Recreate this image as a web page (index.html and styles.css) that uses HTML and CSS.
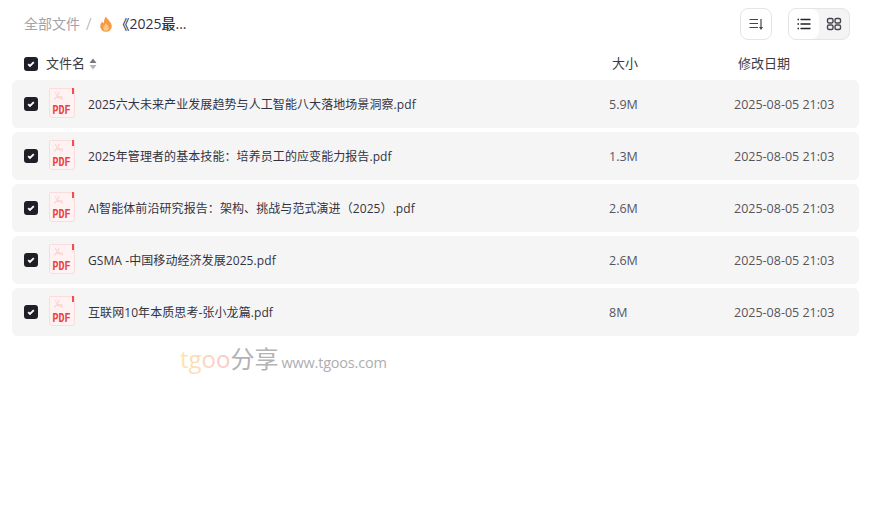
FILE: index.html
```html
<!DOCTYPE html>
<html lang="zh">
<head>
<meta charset="utf-8">
<title>文件列表</title>
<link rel="stylesheet" href="styles.css">
</head>
<body>
<svg class="defs" width="0" height="0">
  <defs>
    <symbol id="check" viewBox="0 0 14 14"><rect width="14" height="14" rx="3" fill="#1f1f27"/><path d="M4.200 7.200 6 9 9.800 5.200" fill="none" stroke="#fff" stroke-width="1.900"/></symbol>
    <symbol id="pdf" viewBox="0 0 26 30">
      <path d="M1.500.5H24.500a1 1 0 0 1 1 1V27a2.500 2.500 0 0 1-2.500 2.500H3A2.500 2.500 0 0 1 .5 27V1.500a1 1 0 0 1 1-1Z" fill="#fff2f2" stroke="#fbdcdc"/>
      <rect x="23" y="0" width="2" height="6" fill="#ee4f4f"/>
      <path d="M6.500 4C7.500 8 9.500 10 14 11M5 11.500C8 10 9.500 7 10 4M6.500 9.500 9 9H14" fill="none" stroke="#f9cdcd" stroke-width="1"/>
      <text class="pdf-text" x="3.500" y="26" textLength="18" lengthAdjust="spacingAndGlyphs">PDF</text>
    </symbol>
  </defs>
</svg>
<main class="page">
  <header class="toolbar">
    <nav class="crumbs">
      <span class="crumb-root">全部文件</span>
      <span class="crumb-sep">/</span>
      <svg class="flame" viewBox="0 0 14 16" width="14" height="16"><path d="M7 .5C7.800 3 12.800 6 12.800 10.300A5.800 5.500 0 0 1 1.200 10.300C1.200 8 2.500 6.500 3.400 5.500C3.700 6.500 4 7 4.800 7.300C4.800 5 5.500 2.500 7 .5Z" fill="#f59a45"/><path d="M7 7C7.500 8.500 9.700 9.500 9.700 11.800A2.700 2.900 0 0 1 4.300 11.800C4.300 10 6.300 9 7 7Z" fill="#fcc98a"/></svg>
      <span class="crumb-current">《2025最...</span>
    </nav>
    <div class="actions">
      <button class="btn sort" aria-label="排序">
        <svg viewBox="0 0 16 16" width="16" height="16"><path d="M1.500 3.500H10M1.500 7.500H10M1.500 11.500H10" stroke="#44444c" stroke-width="1.200" fill="none"/><path d="M13 3V12" stroke="#44444c" stroke-width="1.200"/><path d="M11 11H15L13 14Z" fill="#44444c"/></svg>
      </button>
      <div class="switch">
        <span class="switch-item is-on"><svg viewBox="0 0 16 16" width="16" height="16"><path d="M4.500 3.500H14.500M4.500 8H14.500M4.500 12.500H14.500M1.500 3.500H3M1.500 8H3M1.500 12.500H3" stroke="#222229" stroke-width="1.300"/></svg></span>
        <span class="switch-item"><svg viewBox="0 0 16 16" width="16" height="16"><g fill="none" stroke="#44444c" stroke-width="1.400"><rect x="1.500" y="2.500" width="5.500" height="4.500" rx="1.500"/><rect x="9" y="2.500" width="5.500" height="4.500" rx="1.500"/><rect x="1.500" y="9" width="5.500" height="4.500" rx="1.500"/><rect x="9" y="9" width="5.500" height="4.500" rx="1.500"/></g></svg></span>
      </div>
    </div>
  </header>

  <div class="head">
    <svg class="check"><use href="#check"/></svg>
    <span class="head-name">文件名</span>
    <svg class="sorter" viewBox="0 0 8 12" width="8" height="12"><path d="M4 .5 7.500 5H.5Z" fill="#77777d"/><path d="M.5 7H7.500L4 11.500Z" fill="#b4b4b8"/></svg>
    <span class="head-size">大小</span>
    <span class="head-date">修改日期</span>
  </div>

  <ul class="rows">
    <li class="row"><svg class="check"><use href="#check"/></svg><svg class="pdf"><use href="#pdf"/></svg><span class="name">2025六大未来产业发展趋势与人工智能八大落地场景洞察.pdf</span><span class="size">5.9M</span><span class="date">2025-08-05 21:03</span></li>
    <li class="row"><svg class="check"><use href="#check"/></svg><svg class="pdf"><use href="#pdf"/></svg><span class="name">2025年管理者的基本技能：培养员工的应变能力报告.pdf</span><span class="size">1.3M</span><span class="date">2025-08-05 21:03</span></li>
    <li class="row"><svg class="check"><use href="#check"/></svg><svg class="pdf"><use href="#pdf"/></svg><span class="name">AI智能体前沿研究报告：架构、挑战与范式演进（2025）.pdf</span><span class="size">2.6M</span><span class="date">2025-08-05 21:03</span></li>
    <li class="row"><svg class="check"><use href="#check"/></svg><svg class="pdf"><use href="#pdf"/></svg><span class="name">GSMA -中国移动经济发展2025.pdf</span><span class="size">2.6M</span><span class="date">2025-08-05 21:03</span></li>
    <li class="row"><svg class="check"><use href="#check"/></svg><svg class="pdf"><use href="#pdf"/></svg><span class="name">互联网10年本质思考-张小龙篇.pdf</span><span class="size">8M</span><span class="date">2025-08-05 21:03</span></li>
  </ul>

  <div class="mark"><span class="mark-t">t</span><span class="mark-g">g</span><span class="mark-o1">o</span><span class="mark-o2">o</span><span class="mark-cn">分享</span><span class="mark-url">www.tgoos.com</span></div>
</main>
</body>
</html>
```
FILE: styles.css
```css
* { box-sizing: border-box; }
html, body { margin: 0; padding: 0; background: #fff; }
body {
  width: 874px;
  height: 514px;
  overflow: hidden;
  font-family: "Open Sans", "Noto Sans CJK SC", sans-serif;
  font-size: 13px;
  color: #3b3b45;
}
.defs { position: absolute; }
.page { padding: 8px 15px 0 12px; }

.toolbar { display: flex; justify-content: space-between; align-items: center; height: 32px; padding: 0 9px 0 12px; }
.crumbs { display: flex; align-items: center; font-size: 14px; line-height: 28px; }
.crumb-root { color: #a3a3a9; }
.crumb-sep { color: #a3a3a9; margin: 0 8px 0 6px; font-size: 16px; font-weight: 300; }
.flame { margin-right: 2px; }
.crumb-current { color: #33333f; font-weight: 500; }

.actions { display: flex; gap: 16px; }
.btn { width: 32px; height: 32px; padding: 0; background: #fff; border: 1px solid #e5e5e8; border-radius: 8px; display: flex; align-items: center; justify-content: center; }
.switch { display: flex; width: 62px; height: 32px; border: 1px solid #e5e5e8; border-radius: 8px; background: #f4f4f5; overflow: hidden; }
.switch-item { flex: 1; display: flex; align-items: center; justify-content: center; }
.is-on { background: #fff; border-radius: 0 8px 8px 0; }

.check { width: 14px; height: 14px; flex: none; }
.head { display: flex; align-items: center; height: 40px; padding: 8px 0 0 12px; }
.head-name, .head-size, .head-date { padding-bottom: 3px; }
.head-name { margin-left: 8px; width: 40px; }
.sorter { margin-left: 3px; }
.head-size { margin-left: 515px; width: 126px; }

.rows { list-style: none; margin: 0; padding: 0; display: flex; flex-direction: column; gap: 4px; }
.row { display: flex; align-items: center; height: 48px; padding-left: 12px; background: #f5f5f6; border-radius: 6px; }
.pdf { width: 26px; height: 30px; flex: none; margin: 0 0 2px 11px; }
.pdf-text { font-family: "Liberation Mono", monospace; font-weight: 700; font-size: 12px; fill: #e8403f; }
.name { margin-left: 13px; width: 521px; flex: none; font-size: 12px; line-height: 16px; padding-top: 2px; letter-spacing: .08px; color: #33333f; white-space: nowrap; }
.size { width: 125px; flex: none; font-size: 12.5px; color: #55555d; }
.date { font-size: 12.5px; color: #55555d; white-space: nowrap; }

.mark { display: flex; align-items: baseline; margin: 6px 0 0 168px; height: 36px; font-size: 24px; line-height: 34px; opacity: .6; }
.mark-t { color: #fcd27e; }
.mark-g { color: #fcc98a; }
.mark-o1 { color: #fbb89a; }
.mark-o2 { color: #f9a9a0; }
.mark-cn { color: #808085; }
.mark-url { color: #77777c; font-size: 14.5px; margin-left: 3px; letter-spacing: -.2px; }
```
